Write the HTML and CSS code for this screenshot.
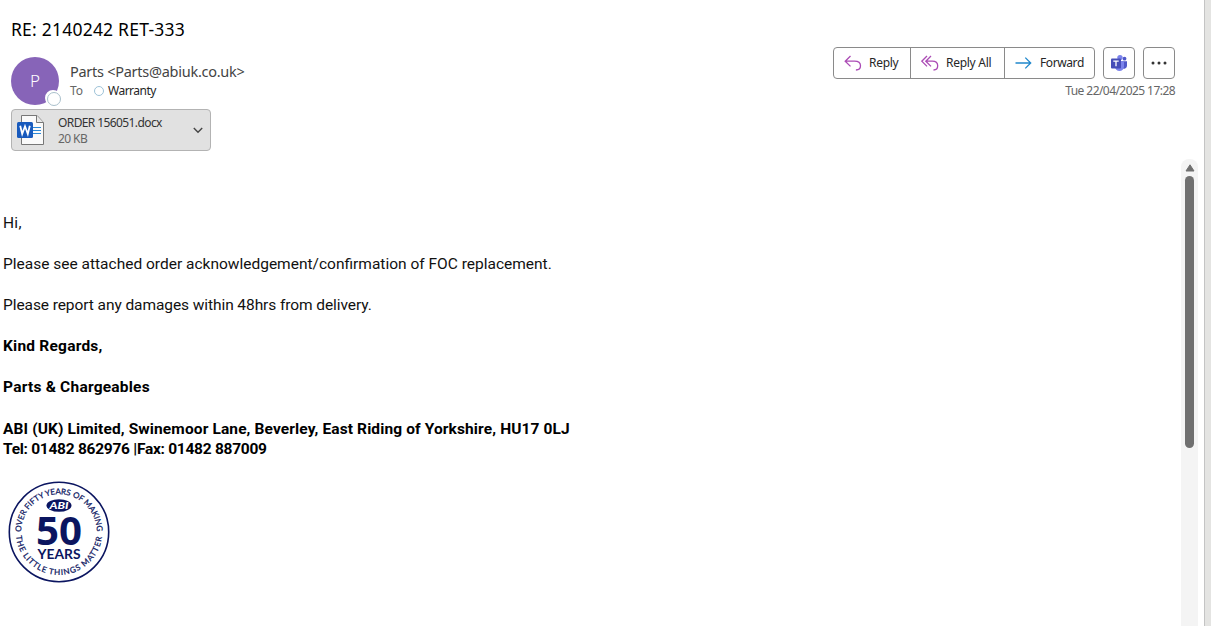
FILE: index.html
```html
<!DOCTYPE html>
<html lang="en">
<head>
<meta charset="utf-8">
<title>RE: 2140242 RET-333</title>
<link rel="stylesheet" href="styles.css">
</head>
<body>
<div class="window">
  <main class="pane">
    <header class="header">
      <h1 class="subject"><span class="t-subject">RE: 2140242 RET-333</span></h1>
      <div class="meta">
        <div class="avatar">P<span class="presence"></span></div>
        <div class="people">
          <div class="sender"><span class="t-sender">Parts &lt;Parts@abiuk.co.uk&gt;</span></div>
          <div class="to"><span class="to-label">To</span><span class="dot"></span><span class="t-recipient">Warranty</span></div>
        </div>
        <div class="side">
          <div class="actions">
            <div class="group">
              <button class="btn reply"><svg width="18" height="16" viewBox="0 0 18 16"><path d="M6.500 1 1.200 6.200l5.300 5.200M1.200 6.200h9.300c3.600 0 6 1.900 6 4.600s-1.900 4.200-4.600 4.200"/></svg><span>Reply</span></button>
              <button class="btn reply-all"><svg width="18" height="16" viewBox="0 0 18 16"><path d="M6 1 .8 6.200 6 11.400M10 1 4.800 6.200l5.200 5.200M4.800 6.200h6.400c3.400 0 5.500 1.900 5.500 4.600s-1.600 4.200-4.200 4.200"/></svg><span>Reply All</span></button>
              <button class="btn forward"><svg width="17" height="14" viewBox="0 0 17 14"><path d="M.5 7h15M10.300 1.600 15.700 7l-5.400 5.400"/></svg><span>Forward</span></button>
            </div>
            <button class="square" aria-label="Teams"><svg width="18" height="18" viewBox="0 0 18 18"><circle cx="14.500" cy="4.700" r="1.900" fill="#5059c9"/><path d="M11 7.200h6v4.800a3 3 0 0 1-5 2z" fill="#5059c9"/><circle cx="10" cy="3.600" r="2.700" fill="#7b83eb"/><path d="M5 7.200h9v5.300a4.500 4.500 0 0 1-9 0z" fill="#7b83eb"/><rect x="1" y="4.500" width="10" height="10" rx="1" fill="#464eb8"/><path d="M3.300 7.200h5.400M6 7.200v5" stroke="#fff" stroke-width="1.300"/></svg></button>
            <button class="square" aria-label="More"><svg width="18" height="4" viewBox="0 0 18 4" fill="#333"><circle cx="3" cy="2" r="1.500"/><circle cx="9" cy="2" r="1.500"/><circle cx="15" cy="2" r="1.500"/></svg></button>
          </div>
          <div class="date"><span class="t-date">Tue 22/04/2025 17:28</span></div>
        </div>
      </div>
      <div class="attachment">
        <svg class="doc" width="28" height="32" viewBox="0 0 28 32"><path d="M4.500 1.500H20l6.500 7v22h-22z" fill="#fafafa" stroke="#777"/><path d="M19.500 1.500v7h7" fill="#e8e8e8" stroke="#777"/><path d="M16 13.500h8M16 16.500h8M16 19.500h8" stroke="#2b88d8" stroke-width="1.200"/><rect x="0" y="8" width="16" height="16" rx="1.500" fill="#185abd"/><path d="m3.200 11.800 2 8.200L8 12.300l2.800 7.700 2-8.200" fill="none" stroke="#fff" stroke-width="1.800"/></svg>
        <div class="file"><div class="name"><span class="t-file">ORDER 156051.docx</span></div><div class="size"><span class="t-size">20 KB</span></div></div>
        <svg class="chevron" width="10" height="7" viewBox="0 0 10 7"><path d="m.8 1 4.200 4.300L9.200 1" fill="none" stroke="#444" stroke-width="1.400"/></svg>
      </div>
    </header>
    <div class="content">
      <article class="body">
        <p><span class="b1">Hi,</span></p>
        <p><span class="b2">Please see attached order acknowledgement/confirmation of FOC replacement.</span></p>
        <p><span class="b3">Please report any damages within 48hrs from delivery.</span></p>
        <p class="strong"><span class="b4">Kind Regards,</span></p>
        <p class="strong"><span class="b5">Parts &amp; Chargeables</span></p>
        <p class="strong address"><span class="b6">ABI (UK) Limited, Swinemoor Lane, Beverley, East Riding of Yorkshire, HU17 0LJ</span><br><span class="b7">Tel: 01482 862976 |Fax: 01482 887009</span></p>
        <svg class="logo" width="104" height="104" viewBox="0 0 104 104">
          <defs><path id="top" d="M14.200 52A37.800 37.800 0 1 1 89.800 52"/><path id="bottom" d="M9 56A43.200 43.200 0 0 0 95 56"/></defs>
          <circle cx="52" cy="52" r="49.700" fill="none" stroke="#0b1560" stroke-width="1.600"/>
          <text class="ring"><textPath href="#top" textLength="118" lengthAdjust="spacing">OVER FIFTY YEARS OF MAKING</textPath></text>
          <text class="ring"><textPath href="#bottom" textLength="126" lengthAdjust="spacing">THE LITTLE THINGS MATTER</textPath></text>
          <ellipse cx="52" cy="25.500" rx="12.500" ry="6.300" fill="#0b1560"/>
          <text class="abi" x="52" y="29" text-anchor="middle" textLength="19" lengthAdjust="spacingAndGlyphs">ABI</text>
          <text class="fifty" x="52" y="65" text-anchor="middle" textLength="46" lengthAdjust="spacingAndGlyphs">50</text>
          <text class="years" x="52" y="78.500" text-anchor="middle" textLength="43" lengthAdjust="spacingAndGlyphs">YEARS</text>
        </svg>
      </article>
      <div class="scrollbar"><svg width="10" height="8" viewBox="0 0 10 8"><path d="M5 .8 9 7H1z" fill="#707070" stroke="#707070" stroke-linejoin="round"/></svg><div class="thumb"></div></div>
    </div>
  </main>
  <div class="edge"></div>
</div>
</body>
</html>
```
FILE: styles.css
```css
* { box-sizing: border-box; }
body { margin: 0; background: #fff; font-family: "Noto Sans", "Open Sans", sans-serif; color: #000; overflow: hidden; }
.window { display: flex; height: 626px; }
.pane { flex: 1; display: flex; flex-direction: column; min-width: 0; }
.edge { width: 7px; background: #e4e4e2; border-left: 1px solid #c4c4c4; }
span { white-space: nowrap; }
.header { height: 159px; padding: 16px 29px 0 11px; flex: none; }
.subject { margin: 0; font-size: 17.500px; font-weight: 400; line-height: 26px; height: 31px; letter-spacing: .22px; }
.meta { display: flex; height: 62px; }
.avatar { position: relative; width: 48px; height: 48px; margin-top: 10px; border-radius: 50%; background: #8764b8; color: #fff; font-size: 17px; font-weight: 300; line-height: 48px; text-align: center; }
.presence { position: absolute; left: 34px; top: 33px; width: 16px; height: 16px; border-radius: 50%; background: #fff; border: 2px solid #fff; }
.presence::after { content: ""; display: block; width: 12px; height: 12px; border: 1px solid #a9bfcb; border-radius: 50%; }
.people { margin: 14px 0 0 11px; flex: 1; }
.sender { font-size: 14.500px; line-height: 20px; height: 21px; color: #444; letter-spacing: -.27px; }
.to { display: flex; align-items: center; font-size: 12px; line-height: 18px; color: #262626; }
.to-label { width: 24px; color: #666; }
.t-recipient { letter-spacing: -.5px; }
.dot { width: 10px; height: 10px; margin-right: 4px; border: 1px solid #9ec3d8; border-radius: 50%; }
.side { display: flex; flex-direction: column; align-items: flex-end; }
.actions { display: flex; gap: 8px; }
.group { display: flex; border: 1px solid #8a8a8a; border-radius: 4px; height: 32px; }
button { font: inherit; font-size: 12px; color: #262626; background: none; border: 0; padding: 0; }
.btn { display: flex; align-items: center; }
.btn span { letter-spacing: -.28px; padding-bottom: 1px; }
.btn + .btn { border-left: 1px solid #8a8a8a; }
.btn svg { fill: none; stroke: #ab4bb5; stroke-width: 1.300; }
.reply { width: 76px; padding-left: 10px; gap: 7px; }
.reply-all { width: 94px; padding-left: 10px; gap: 7px; }
.forward { width: 90px; padding-left: 10px; gap: 8px; }
.forward .t, .forward span { letter-spacing: -.4px; }
.forward svg { stroke: #2188cc; }
.square { width: 32px; height: 32px; border: 1px solid #8a8a8a; border-radius: 4px; display: flex; align-items: center; justify-content: center; }
.date { margin-top: 3px; font-size: 12px; line-height: 18px; color: #666; letter-spacing: -.56px; }
.attachment { display: flex; align-items: center; width: 200px; height: 42px; border: 1px solid #b3b3b3; border-radius: 4px; background: #e1e1e1; padding: 0 7px 0 5px; }
.file { flex: 1; margin-left: 13px; padding-top: 2px; font-size: 12px; line-height: 16px; letter-spacing: -.6px; }
.name { color: #333; }
.size { color: #666; }
.content { flex: 1; display: flex; min-height: 0; }
.body { flex: 1; padding: 54px 0 0 3px; font-family: Roboto, "Liberation Sans", sans-serif; font-size: 15.500px; line-height: 20.500px; color: #111; }
.body p { margin: 0 0 20.500px; }
.body .address { padding-top: .5px; margin-bottom: 20px; }
.b1 { letter-spacing: .3px; }
.b3 { letter-spacing: -.08px; }
.b4, .b5 { letter-spacing: .22px; }
.b6 { letter-spacing: .12px; }
.b7 { letter-spacing: -.27px; }
.strong { font-weight: 700; color: #000; }
.logo { display: block; margin: 0 0 0 3.500px; }
.ring { font: 400 8px Lato, sans-serif; fill: #0b1560; stroke: #0b1560; stroke-width: .25px; }
.abi { font: italic 900 9.500px Lato, sans-serif; fill: #fff; }
.fifty { font: 700 40px "Open Sans", sans-serif; fill: #0b1560; }
.years { font: 700 13.500px Lato, sans-serif; fill: #0b1560; }
.scrollbar { width: 17px; margin-right: 6px; background: #f4f4f4; border-radius: 8px 8px 0 0; display: flex; flex-direction: column; align-items: center; padding-top: 5px; gap: 4px; }
.thumb { width: 9px; height: 272px; border-radius: 5px; background: #707070; }
```
